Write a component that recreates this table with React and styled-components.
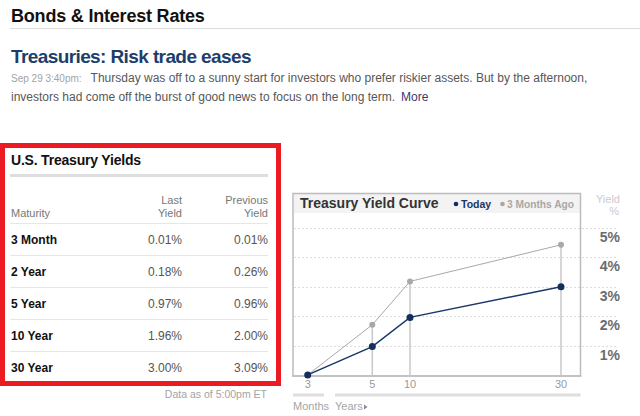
import React from "react";
import styled, { createGlobalStyle } from "styled-components";

const Global = createGlobalStyle`
  html, body { margin: 0; padding: 0; background: #fff; }
  body { font-family: "Liberation Sans", Arial, Helvetica, sans-serif; }
`;

const Page = styled.div`
  width: 640px;
  height: 416px;
  overflow: hidden;
  background: #fff;
`;

const Header = styled.header`
  margin-left: 10px;
  padding: 5px 0 1px 1px;
  border-bottom: 1px solid #dcdcdc;
`;

const PageTitle = styled.h1`
  margin: 0;
  font-size: 18px;
  line-height: 22px;
  font-weight: bold;
  color: #111;
  letter-spacing: -0.2px;
`;

const Story = styled.section`
  padding: 16px 10px 0 11px;
`;

const Headline = styled.h2`
  margin: 0;
  font-size: 19px;
  line-height: 24px;
  font-weight: bold;
  color: #1d3e6b;
  letter-spacing: -0.6px;
`;

const Summary = styled.p`
  margin: 0;
  width: 600px;
  font-size: 12px;
  line-height: 19px;
  color: #575757;
`;

const Stamp = styled.span`
  font-size: 10px;
  color: #a3a3a3;
  margin-right: 9px;
`;

const More = styled.a`
  color: #3a3a6c;
  text-decoration: none;
  margin-left: 6px;
`;

const Markets = styled.section`
  display: flex;
  gap: 4px;
  margin-top: 36px;
`;

const LeftColumn = styled.div`
  width: 281px;
  display: flex;
  flex-direction: column;
`;

const YieldsBox = styled.div`
  box-sizing: border-box;
  height: 243px;
  border: 5px solid #ec1b23;
  padding: 3px 8px 0 5px;
  overflow: hidden;
`;

const BoxTitle = styled.h3`
  margin: 0 0 5px;
  padding-left: 1px;
  font-size: 14px;
  line-height: 18px;
  font-weight: bold;
  color: #111;
  letter-spacing: -0.2px;
`;

const SectionBar = styled.div`
  height: 3px;
  background: #dedede;
`;

const Row = styled.div`
  display: grid;
  grid-template-columns: 1fr 86px 86px;
  align-items: ${(p) => (p.$head ? "end" : "center")};
  height: ${(p) => (p.$head ? "42px" : "31px")};
  padding-bottom: ${(p) => (p.$head ? "4px" : "0")};
  border-bottom: 1px solid #e6e6e6;
`;

const HeadCell = styled.div`
  font-size: 11px;
  line-height: 12.5px;
  color: #777;
  text-align: ${(p) => (p.$right ? "right" : "left")};
  padding-left: ${(p) => (p.$right ? "0" : "1px")};
`;

const LabelCell = styled.div`
  font-size: 12px;
  font-weight: bold;
  color: #111;
  padding-left: 1px;
`;

const ValueCell = styled.div`
  font-size: 12px;
  color: #555;
  text-align: right;
`;

const DataNote = styled.div`
  margin-top: 2px;
  padding-right: 14px;
  text-align: right;
  font-size: 10.5px;
  line-height: 13px;
  color: #a3a3a3;
`;

const ChartColumn = styled.div`
  margin-top: 37px;
  width: 355px;
`;

const ChartSvg = styled.svg`
  display: block;
  font-family: "Liberation Sans", Arial, Helvetica, sans-serif;
`;

const yields = [
  { label: "3 Month", last: "0.01%", prev: "0.01%" },
  { label: "2 Year", last: "0.18%", prev: "0.26%" },
  { label: "5 Year", last: "0.97%", prev: "0.96%" },
  { label: "10 Year", last: "1.96%", prev: "2.00%" },
  { label: "30 Year", last: "3.00%", prev: "3.09%" },
];

const BASE = 195.2;
const STEP = 29.5;
const yOf = (v) => BASE - v * STEP;
const xs = [22.7, 87.3, 125, 276];
const xLabels = ["3", "5", "10", "30"];
const today = [0.01, 0.97, 1.96, 3.0];
const ago = [0.01, 1.71, 3.18, 4.42];

function YieldCurve() {
  const todayPts = today.map((v, i) => `${xs[i]},${yOf(v)}`).join(" ");
  const agoPts = ago.map((v, i) => `${xs[i]},${yOf(v)}`).join(" ");
  return (
    <ChartSvg width="355" height="236" viewBox="0 0 355 236">
      <rect x="9" y="14" width="286" height="19" fill="#f3f3f3" />
      {[1, 2, 3, 4, 5].map((k) => (
        <line
          key={k}
          x1="9"
          x2="333"
          y1={Math.round(yOf(k)) + 0.5}
          y2={Math.round(yOf(k)) + 0.5}
          stroke="#dcdcdc"
          strokeWidth="1"
          strokeDasharray="2 2"
        />
      ))}
      <path d="M8 196 V13.5 H295.5 V196" fill="none" stroke="#bcbcbc" strokeWidth="1.5" />
      <line x1="7" x2="296.5" y1="196" y2="196" stroke="#c2c2c2" strokeWidth="2" />
      {[1, 2, 3].map((i) => (
        <line
          key={i}
          x1={xs[i]}
          x2={xs[i]}
          y1={yOf(ago[i])}
          y2="196"
          stroke="#c8c8c8"
          strokeWidth="1.5"
        />
      ))}
      <polyline points={agoPts} fill="none" stroke="#a8a8a8" strokeWidth="1" />
      {ago.map((v, i) => (
        <circle key={i} cx={xs[i]} cy={yOf(v)} r="3" fill="#a8a8a8" />
      ))}
      <polyline points={todayPts} fill="none" stroke="#1b3766" strokeWidth="1.5" />
      {today.map((v, i) => (
        <circle key={i} cx={xs[i]} cy={yOf(v)} r="3.5" fill="#142f5e" />
      ))}

      <text x="15" y="27.5" fontSize="14" fontWeight="bold" fill="#333">
        Treasury Yield Curve
      </text>
      <circle cx="171" cy="24" r="2.3" fill="#142f5e" />
      <text x="176" y="28" fontSize="10.5" fontWeight="bold" fill="#1b3766">
        Today
      </text>
      <circle cx="217.5" cy="24" r="2.3" fill="#a8a8a8" />
      <text x="222" y="28" fontSize="10.2" fontWeight="bold" fill="#a8a8a8">
        3 Months Ago
      </text>

      <text x="335" y="23" fontSize="11" fill="#cbcbcb" textAnchor="end">
        Yield
      </text>
      <text x="334" y="35" fontSize="11" fill="#cbcbcb" textAnchor="end">
        %
      </text>
      {[5, 4, 3, 2, 1].map((k) => (
        <text
          key={k}
          x="335"
          y={Math.round(yOf(k)) + 13.5}
          fontSize="14"
          fontWeight="bold"
          fill="#6b6b6b"
          textAnchor="end"
        >
          {k}%
        </text>
      ))}

      {xLabels.map((l, i) => (
        <text key={l} x={xs[i]} y="208" fontSize="11" fill="#9a9a9a" textAnchor="middle">
          {l}
        </text>
      ))}
      <rect x="8" y="213.5" width="31" height="3" fill="#dedede" />
      <rect x="50" y="213.5" width="245.5" height="3" fill="#dedede" />
      <text x="8" y="230" fontSize="11" fill="#a5a5a5">
        Months
      </text>
      <text x="50" y="230" fontSize="11" fill="#a5a5a5">
        Years
      </text>
      <polygon points="79,224.5 82.5,227 79,229.5" fill="#8a8a8a" />
    </ChartSvg>
  );
}

export default function App() {
  return (
    <Page>
      <Global />
      <Header>
        <PageTitle>Bonds &amp; Interest Rates</PageTitle>
      </Header>
      <Story>
        <Headline>Treasuries: Risk trade eases</Headline>
        <Summary>
          <Stamp>Sep 29 3:40pm:</Stamp>
          <span>
            Thursday was off to a sunny start for investors who prefer riskier assets. But by the
            afternoon,
          </span>{" "}
          <span>investors had come off the burst of good news to focus on the long term.</span>
          <More href="#">More</More>
        </Summary>
      </Story>
      <Markets>
        <LeftColumn>
          <YieldsBox>
            <BoxTitle>U.S. Treasury Yields</BoxTitle>
            <SectionBar />
            <Row $head>
              <HeadCell>Maturity</HeadCell>
              <HeadCell $right>
                Last
                <br />
                Yield
              </HeadCell>
              <HeadCell $right>
                Previous
                <br />
                Yield
              </HeadCell>
            </Row>
            {yields.map((y) => (
              <Row key={y.label}>
                <LabelCell>{y.label}</LabelCell>
                <ValueCell>{y.last}</ValueCell>
                <ValueCell>{y.prev}</ValueCell>
              </Row>
            ))}
          </YieldsBox>
          <DataNote>Data as of 5:00pm ET</DataNote>
        </LeftColumn>
        <ChartColumn>
          <YieldCurve />
        </ChartColumn>
      </Markets>
    </Page>
  );
}
